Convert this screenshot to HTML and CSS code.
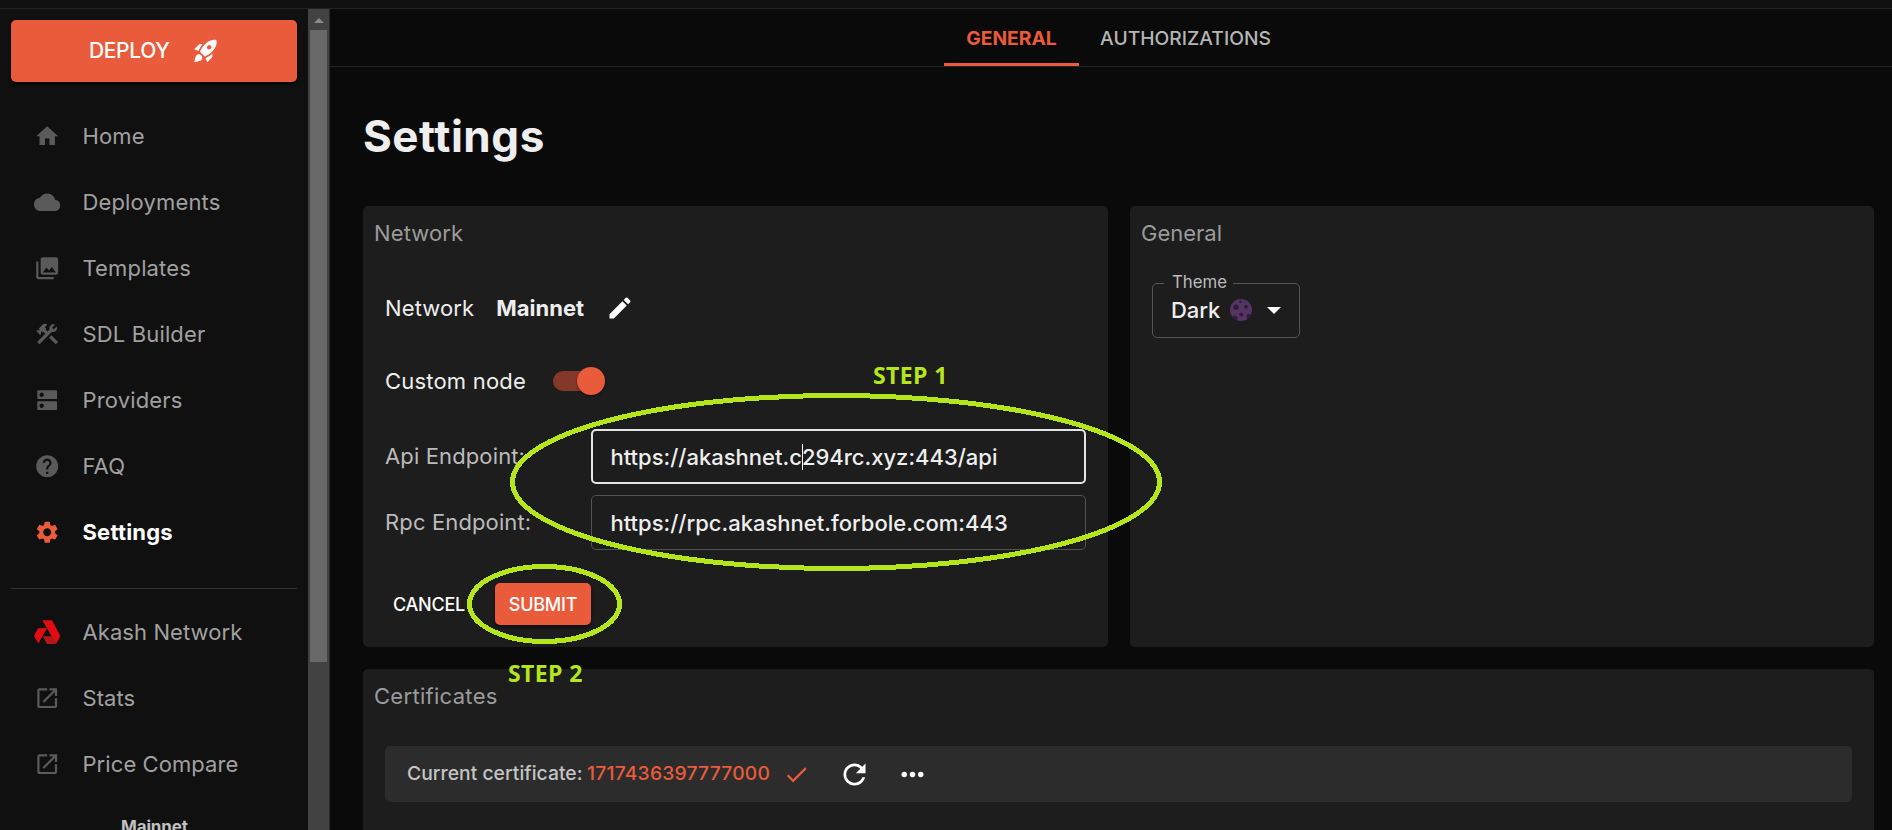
FILE: index.html
```html
<!DOCTYPE html>
<html lang="en">
<head>
<meta charset="utf-8">
<title>Settings</title>
<link rel="stylesheet" href="styles.css">
</head>
<body>
<div class="app">
  <div class="topbar"></div>
  <div class="body">
    <aside class="sidebar">
      <div class="sidebar-content">
        <button class="deploy"><span>DEPLOY</span>
          <svg viewBox="0 0 24 24"><path d="M9.19 6.35c-2.04 2.29-3.44 5.58-3.57 5.89L2 10.69l4.05-4.05c.47-.47 1.15-.68 1.81-.55l1.33.26zM11.17 17s3.74-1.55 5.89-3.7c5.4-5.4 4.5-9.62 4.21-10.57-.95-.3-5.17-1.19-10.57 4.21C8.55 9.09 7 12.83 7 12.83L11.17 17zm6.48-2.19c-2.29 2.04-5.58 3.44-5.89 3.57L13.31 22l4.05-4.05c.47-.47.68-1.15.55-1.81l-.26-1.33zM9 18c0 .83-.34 1.58-.88 2.12C6.94 21.3 2 22 2 22s.7-4.94 1.88-6.12C4.42 15.34 5.17 15 6 15c1.66 0 3 1.34 3 3zm4-9c0-1.1.9-2 2-2s2 .9 2 2-.9 2-2 2-2-.9-2-2z"/></svg>
        </button>
        <nav class="nav">
          <a class="nav-item"><svg viewBox="0 0 24 24"><path d="M10 20v-6h4v6h5v-8h3L12 3 2 12h3v8z"/></svg><span>Home</span></a>
          <a class="nav-item"><svg viewBox="0 0 24 24"><path d="M19.35 10.04C18.67 6.59 15.64 4 12 4 9.11 4 6.6 5.64 5.35 8.04 2.34 8.36 0 10.91 0 14c0 3.31 2.69 6 6 6h13c2.76 0 5-2.24 5-5 0-2.64-2.05-4.78-4.65-4.96z"/></svg><span>Deployments</span></a>
          <a class="nav-item"><svg viewBox="0 0 24 24"><path d="M22 16V4c0-1.1-.9-2-2-2H8c-1.1 0-2 .9-2 2v12c0 1.1.9 2 2 2h12c1.1 0 2-.9 2-2zM8 16l3.3-4.600 2.300 2.800L16.200 11l3.800 5H8zM2 6v14c0 1.1.9 2 2 2h14v-2H4V6H2z"/></svg><span>Templates</span></a>
          <a class="nav-item"><svg viewBox="0 0 24 24"><path d="m13.78 15.17 2.12-2.12 6 6-2.12 2.12z"/><path d="M17.5 10c1.93 0 3.5-1.57 3.5-3.5 0-.58-.16-1.12-.41-1.6l-2.7 2.7-1.49-1.49 2.7-2.7c-.48-.25-1.02-.41-1.6-.41C15.57 3 14 4.57 14 6.5c0 .41.08.8.21 1.16l-1.85 1.85-1.78-1.78.71-.71-1.41-1.41L12 3.49c-1.17-1.17-3.07-1.17-4.24 0L4.22 7.03l1.41 1.41H2.81l-.71.71 3.54 3.54.71-.71V9.15l1.41 1.41.71-.71 1.78 1.78-7.41 7.41 2.12 2.12L16.34 9.79c.36.13.75.21 1.16.21z"/></svg><span>SDL Builder</span></a>
          <a class="nav-item"><svg viewBox="0 0 24 24"><path d="M20 13H4c-.55 0-1 .45-1 1v6c0 .55.45 1 1 1h16c.55 0 1-.45 1-1v-6c0-.55-.45-1-1-1zM7 19c-1.1 0-2-.9-2-2s.9-2 2-2 2 .9 2 2-.9 2-2 2zM20 3H4c-.55 0-1 .45-1 1v6c0 .55.45 1 1 1h16c.55 0 1-.45 1-1V4c0-.55-.45-1-1-1zM7 9c-1.1 0-2-.9-2-2s.9-2 2-2 2 .9 2 2-.9 2-2 2z"/></svg><span>Providers</span></a>
          <a class="nav-item"><svg viewBox="0 0 24 24"><path d="M12 2C6.48 2 2 6.48 2 12s4.48 10 10 10 10-4.48 10-10S17.52 2 12 2zm1 17h-2v-2h2v2zm2.07-7.75l-.9.92C13.45 12.9 13 13.5 13 15h-2v-.5c0-1.1.45-2.1 1.17-2.83l1.24-1.26c.37-.36.59-.86.59-1.41 0-1.1-.9-2-2-2s-2 .9-2 2H8c0-2.21 1.79-4 4-4s4 1.79 4 4c0 .88-.36 1.68-.93 2.25z"/></svg><span>FAQ</span></a>
          <a class="nav-item active"><svg viewBox="0 0 24 24"><path d="M19.14 12.94c.04-.3.06-.61.06-.94 0-.32-.02-.64-.07-.94l2.03-1.58c.18-.14.23-.41.12-.61l-1.92-3.32c-.12-.22-.37-.29-.59-.22l-2.39.96c-.5-.38-1.03-.7-1.62-.94l-.36-2.54c-.04-.24-.24-.41-.48-.41h-3.84c-.24 0-.43.17-.47.41l-.36 2.54c-.59.24-1.13.57-1.62.94l-2.39-.96c-.22-.08-.47 0-.59.22L2.74 8.87c-.12.21-.08.47.12.61l2.03 1.58c-.05.3-.09.63-.09.94s.02.64.07.94l-2.03 1.58c-.18.14-.23.41-.12.61l1.92 3.32c.12.22.37.29.59.22l2.39-.96c.5.38 1.03.7 1.62.94l.36 2.54c.05.24.24.41.48.41h3.84c.24 0 .44-.17.47-.41l.36-2.54c.59-.24 1.13-.56 1.62-.94l2.39.96c.22.08.47 0 .59-.22l1.92-3.32c.12-.22.07-.47-.12-.61l-2.01-1.58zM12 15.6c-1.98 0-3.6-1.62-3.6-3.6s1.62-3.6 3.6-3.6 3.6 1.62 3.6 3.6-1.62 3.6-3.6 3.6z"/></svg><span>Settings</span></a>
        </nav>
        <hr class="divider">
        <nav class="nav nav-external">
          <a class="nav-item"><svg viewBox="102 179 79 79"><path fill="#e20b13" d="M127 183h29l25 47-13 24zM114 207h27l-26 45-13-22z"/><path fill="#ae1a1a" d="M128 231h27l13 23h-27z"/></svg><span>Akash Network</span></a>
          <a class="nav-item"><svg viewBox="0 0 24 24"><path d="M19 19H5V5h7V3H5c-1.11 0-2 .9-2 2v14c0 1.1.89 2 2 2h14c1.1 0 2-.9 2-2v-7h-2v7zM14 3v2h3.59l-9.83 9.83 1.41 1.41L19 6.41V10h2V3h-7z"/></svg><span>Stats</span></a>
          <a class="nav-item"><svg viewBox="0 0 24 24"><path d="M19 19H5V5h7V3H5c-1.11 0-2 .9-2 2v14c0 1.1.89 2 2 2h14c1.1 0 2-.9 2-2v-7h-2v7zM14 3v2h3.59l-9.83 9.83 1.41 1.41L19 6.41V10h2V3h-7z"/></svg><span>Price Compare</span></a>
        </nav>
        <div class="network-name">Mainnet</div>
      </div>
      <div class="scrollbar">
        <svg class="scroll-up" viewBox="0 0 10 5"><path d="M0 5h10L5 0z"/></svg>
        <div class="thumb"></div>
      </div>
    </aside>

    <main class="main">
      <div class="tabs">
        <div class="tab selected"><span>GENERAL</span></div>
        <div class="tab"><span>AUTHORIZATIONS</span></div>
      </div>
      <div class="page">
        <h1>Settings</h1>
        <div class="cards">
          <section class="card network">
            <h2>Network</h2>
            <div class="row network-row">
              <span>Network</span><b>Mainnet</b>
              <svg class="edit" viewBox="0 0 24 24"><path d="M3 17.25V21h3.75L17.81 9.94l-3.75-3.75L3 17.25zM20.71 7.04c.39-.39.39-1.02 0-1.41l-2.34-2.34c-.39-.39-1.02-.39-1.41 0l-1.83 1.83 3.75 3.75 1.83-1.83z"/></svg>
            </div>
            <div class="row custom-row"><span>Custom node</span><span class="switch"><span class="knob"></span></span></div>
            <div class="field"><label>Api Endpoint:</label><div class="input focused"><span>https://akashnet.c</span><i class="caret"></i><span>294rc.xyz:443/api</span></div></div>
            <div class="field"><label>Rpc Endpoint:</label><div class="input"><span>https://rpc.akashnet.forbole.com:443</span></div></div>
            <div class="actions"><button class="btn cancel">CANCEL</button><button class="btn submit">SUBMIT</button></div>
          </section>
          <section class="card general">
            <h2>General</h2>
            <fieldset class="select">
              <legend>Theme</legend>
              <div class="select-value">
                <span>Dark</span>
                <svg class="moon" viewBox="0 0 22 22"><circle cx="11" cy="11" r="11" fill="#553463"/><g fill="#321c3d"><circle cx="6" cy="8.3" r="2.7"/><circle cx="16" cy="7.7" r="2"/><circle cx="11.2" cy="15.6" r="2"/><circle cx="10.5" cy="2.7" r="1.3"/><path d="M2.5 17.9a2.5 2.5 0 0 1 4.5 3.3A11 11 0 0 1 2.5 17.9zM21 15.5a2.3 2.3 0 0 0-3.6 4.3A11 11 0 0 0 21 15.5z"/></g></svg>
                <svg class="arrow" viewBox="0 0 14 7"><path d="M0 0h14L7 7z"/></svg>
              </div>
            </fieldset>
          </section>
          <section class="card certificates">
            <h2>Certificates</h2>
            <div class="cert">
              <span class="cert-label">Current certificate:</span><span class="cert-id">1717436397777000</span>
              <svg class="check" viewBox="0 0 24 24"><path d="M9 16.17 4.83 12l-1.42 1.41L9 19 21 7l-1.41-1.41z"/></svg>
              <svg class="refresh" viewBox="0 0 24 24"><path d="M17.65 6.35C16.2 4.9 14.21 4 12 4c-4.42 0-7.99 3.58-7.99 8s3.57 8 7.99 8c3.73 0 6.84-2.55 7.73-6h-2.08c-.82 2.33-3.04 4-5.65 4-3.31 0-6-2.69-6-6s2.69-6 6-6c1.66 0 3.14.69 4.22 1.78L13 11h7V4l-2.35 2.35z"/></svg>
              <svg class="more" viewBox="0 0 24 24"><circle cx="6" cy="12" r="2"/><circle cx="12" cy="12" r="2"/><circle cx="18" cy="12" r="2"/></svg>
            </div>
          </section>
        </div>
      </div>
    </main>
  </div>
  <svg class="annotations" viewBox="0 0 1892 830">
    <g fill="none" stroke="#b5e61d" stroke-width="5" shape-rendering="crispEdges">
      <ellipse cx="836" cy="482" rx="323.5" ry="86.5"/>
      <ellipse cx="544.5" cy="604" rx="75" ry="37.5"/>
    </g>
    <g class="step" fill="#b5e61d">
      <text x="873" y="384" textLength="74.5">STEP 1</text>
      <text x="508" y="682" textLength="74.5">STEP 2</text>
    </g>
  </svg>
</div>
</body>
</html>
```

FILE: styles.css
```css
* { box-sizing: border-box; }
body { margin: 0; background: #0a0a0a; color: #eee; font-family: Inter, "Liberation Sans", sans-serif; font-size: 22px; letter-spacing: 0.13px; overflow: hidden; }
svg { fill: currentColor; flex: none; display: block; }
button { font-family: inherit; border: 0; padding: 0; color: #fff; }
h1, h2 { margin: 0; }

.app { position: relative; width: 1892px; height: 830px; overflow: hidden; display: flex; flex-direction: column; }
.topbar { flex: none; height: 9px; background: #101010; border-bottom: 1px solid #232323; }
.body { flex: 1; min-height: 0; display: flex; }

.sidebar { flex: none; width: 330px; display: flex; background: #101010; border-right: 1px solid #282828; overflow: hidden; }
.sidebar-content { width: 308px; padding: 11px 11px 0; flex: none; }
.deploy { width: 286px; height: 62px; border-radius: 5px; background: #e95b3a; font-size: 21px; font-weight: 500; letter-spacing: -0.35px; display: flex; align-items: center; padding-left: 78px; box-shadow: 0 2px 3px #000; }
.deploy span { width: 103px; text-align: left; padding-bottom: 1px; }
.deploy svg { width: 27.5px; height: 27.5px; }
.nav { display: flex; flex-direction: column; padding-top: 21px; }
.nav-item { height: 66px; display: flex; align-items: center; padding-left: 22.5px; gap: 22.6px; color: #a0a0a0; letter-spacing: 0.15px; }
.nav-item svg { width: 26.4px; height: 26.4px; color: #5a5a5a; }
.nav-item.active { color: #fff; font-weight: 700; letter-spacing: 0.2px; }
.nav-item.active svg { color: #e95b3a; }
.divider { margin: 23px 0 0; border: 0; height: 1px; background: #303030; }
.nav-external { padding-top: 10px; }
.nav-external .nav-item { letter-spacing: 0.08px; }
.network-name { padding-left: 110px; font-size: 17px; line-height: 22px; font-weight: 700; letter-spacing: -0.15px; color: #c0c0c0; margin-top: 19px; }

.scrollbar { width: 21px; background: #424242; flex: none; display: flex; flex-direction: column; align-items: center; padding-top: 9px; }
.scroll-up { width: 10px; height: 5px; color: #8a8a8a; }
.thumb { width: 17px; height: 632px; margin-top: 7px; background: #686868; }

.main { flex: 1; min-width: 0; }
.tabs { height: 58px; display: flex; justify-content: center; border-bottom: 1px solid #232323; font-size: 19.25px; font-weight: 500; color: #b5b5b5; padding-left: 13px; letter-spacing: 0; }
.tab { width: 135px; display: flex; align-items: center; justify-content: center; border-bottom: 3px solid transparent; padding-top: 4px; }
.tab span { padding-left: 1px; }
.tab + .tab { width: 213px; }
.tab.selected { color: #e95b3a; font-weight: 700; border-color: #e95b3a; }

.page { padding: 43px 18px 0 33px; }
h1 { font-size: 44px; line-height: 53px; font-weight: 700; letter-spacing: 0.55px; }
.cards { margin-top: 43px; display: grid; grid-template-columns: 745px 744px; grid-template-rows: 441px 200px; gap: 22px; }
.card { background: #1d1d1d; border-radius: 5px; padding: 11px; }
h2 { font-size: 22px; font-weight: 400; color: #9b9b9b; line-height: 32px; }
.general h2 { letter-spacing: 0; }
.certificates { grid-column: 1 / 3; }
.certificates h2 { letter-spacing: 0.3px; }

.row { display: flex; align-items: center; padding-left: 11px; }
.network-row { margin-top: 38px; height: 42px; gap: 22px; }
.network-row b { font-weight: 700; letter-spacing: 0; }
.edit { width: 28px; height: 28px; color: #fff; margin-left: -0.5px; }
.custom-row { margin-top: 31px; height: 42px; gap: 27px; }
.custom-row > span:first-child { letter-spacing: 0.2px; }
.switch { width: 52px; height: 20px; border-radius: 10px; background: linear-gradient(90deg, #84382a 47px, transparent 47px); display: flex; justify-content: flex-end; align-items: center; }
.knob { flex: none; width: 28px; height: 28px; border-radius: 50%; background: #e95b3a; box-shadow: 0 1px 2px #0008; }
.field { height: 55px; margin-bottom: 11px; padding: 0 11px; display: grid; grid-template-columns: 206px 495px; align-items: center; }
.custom-row + .field { margin-top: 27px; }
.field label { color: #bbb; padding-bottom: 1px; }
.input { height: 55px; border: 1px solid #535353; border-radius: 5px; padding-left: 18.5px; display: flex; align-items: center; font-weight: 500; letter-spacing: 0; }
.input.focused { border: 2px solid #e5e5e5; padding-left: 17.5px; }
.caret { width: 1px; height: 26px; background: #fff; margin-right: -1px; }
.actions { display: flex; gap: 22px; margin-top: 33px; padding-left: 11px; }
.btn { height: 42px; font-size: 18px; font-weight: 500; border-radius: 5px; background: none; letter-spacing: -0.25px; }
.cancel { width: 88px; text-align: center; }
.submit { width: 96px; background: #e95b3a; box-shadow: 0 2px 4px #0009; }

.select { margin: 22px 0 0 11px; width: 148px; height: 67px; border: 1px solid #555; border-radius: 5px; padding: 0 0 0 18px; min-width: 0; }
.select legend { margin-left: -7px; padding: 0 6px 2px 8px; font-size: 16.8px; line-height: 23px; letter-spacing: 0; color: #bbb; }
.select-value { display: flex; align-items: center; height: 32px; margin-top: -2px; font-weight: 500; }
.select-value span { width: 47px; letter-spacing: -0.1px; }
.moon { width: 22px; height: 22px; margin-left: 11.5px; }
.arrow { width: 14px; height: 7px; margin-left: 15px; color: #fff; }

.cert { margin: 34px 11px 0; height: 56px; border-radius: 5px; background: #2c2c2c; display: flex; align-items: center; padding-left: 22px; font-size: 19.25px; font-weight: 500; color: #c4c4c4; letter-spacing: 0; }
.cert span { padding-bottom: 2px; }
.cert-label { width: 174px; white-space: nowrap; letter-spacing: 0.05px; }
.cert-id { color: #e95b3a; margin-left: 6px; width: 183px; letter-spacing: 0.22px; }
.check { width: 27px; height: 27px; color: #e95b3a; margin-left: 12.5px; }
.refresh { width: 33px; height: 33px; color: #fff; margin-left: 28.5px; }
.more { width: 33px; height: 33px; color: #fff; margin-left: 25px; }

.annotations { position: absolute; left: 0; top: 0; width: 1892px; height: 830px; pointer-events: none; }
.step { font: 700 23px "Open Sans", "Noto Sans", sans-serif; letter-spacing: 0; }
```
